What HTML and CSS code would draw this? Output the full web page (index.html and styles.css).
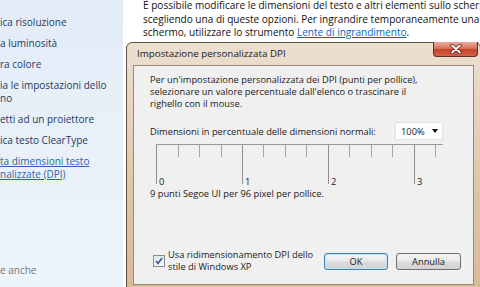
FILE: index.html
```html
<!DOCTYPE html>
<html lang="it">
<head>
    <meta charset="UTF-8">
    <meta name="viewport" content="width=device-width, initial-scale=1.0">
    <title>Schermo</title>
    <link rel="stylesheet" href="styles.css">
</head>
<body>
    <div class="window">
        <nav class="tasks">
            <a href="#" class="task">ica risoluzione</a>
            <a href="#" class="task">a luminosità</a>
            <a href="#" class="task">ra colore</a>
            <a href="#" class="task">ia le impostazioni dello<br>no</a>
            <a href="#" class="task">etti ad un proiettore</a>
            <a href="#" class="task">ica testo ClearType</a>
            <a href="#" class="task active">ta dimensioni testo<br>nalizzate (DPI)</a>
            <div class="see-also">e anche</div>
        </nav>
        <div class="content">
            <p class="intro">È possibile modificare le dimensioni del testo e altri elementi sullo schermo<br>
            scegliendo una di queste opzioni. Per ingrandire temporaneamente una parte dello<br>
            schermo, utilizzare lo strumento <a href="#">Lente di ingrandimento</a>.</p>
        </div>

        <div class="dialog">
            <div class="titlebar">
                <span class="title">Impostazione personalizzata DPI</span>
                <button class="close">
                    <svg width="12" height="10" viewBox="0 0 12 10">
                        <path d="M2 1.5 L10 8.5 M10 1.5 L2 8.5" stroke="#5a2418" stroke-width="3.4" stroke-linecap="round"/>
                        <path d="M2 1.5 L10 8.5 M10 1.5 L2 8.5" stroke="#fff" stroke-width="1.8" stroke-linecap="round"/>
                    </svg>
                </button>
            </div>
            <div class="client">
                <p class="lead">Per un'impostazione personalizzata dei DPI (punti per pollice),<br>
                selezionare un valore percentuale dall'elenco o trascinare il<br>
                righello con il mouse.</p>
                <div class="scale-row">
                    <span>Dimensioni in percentuale delle dimensioni normali:</span>
                    <div class="select">100%<span class="arrow"></span></div>
                </div>
                <div class="ruler">
                    <div class="major"><span>0</span></div>
                    <div class="major"><span>1</span></div>
                    <div class="major"><span>2</span></div>
                    <div class="major last"><span>3</span></div>
                </div>
                <p class="info">9 punti Segoe UI per 96 pixel per pollice.</p>
                <div class="footer">
                    <label class="check">
                        <span class="box">
                            <svg width="8" height="8" viewBox="0 0 8 8">
                                <path d="M1 4 L3 6.5 L7 1" fill="none" stroke="#3b5b8f" stroke-width="1.6"/>
                            </svg>
                        </span>
                        <span>Usa ridimensionamento DPI dello<br>stile di Windows XP</span>
                    </label>
                    <button class="btn default">OK</button>
                    <button class="btn">Annulla</button>
                </div>
            </div>
        </div>
    </div>
</body>
</html>
```

FILE: styles.css
```css
* {box-sizing: border-box;}

body {
    margin: 0;
    overflow: hidden;
    font-family: "Open Sans", "Noto Sans", sans-serif;
    background: #fff;
}

p {
    margin: 0;
}

.window {
    display: flex;
    position: relative;
    width: 480px;
    height: 287px;
    overflow: hidden;
}

/* left task pane */
.tasks {
    width: 123px;
    flex: none;
    display: flex;
    flex-direction: column;
    align-items: flex-start;
    gap: 8px;
    padding: 16px 0 10px 0;
    background: linear-gradient(to bottom, #e3ecf7, #eef4fb);
    white-space: nowrap;
    overflow: hidden;
}

.task {
    font-size: 10px;
    line-height: 13px;
    color: #1e3a5f;
    text-decoration: none;
}

.task.active {
    color: #2a64b8;
    text-decoration: underline;
}

.see-also {
    margin-top: auto;
    font-size: 10px;
    line-height: 13px;
    color: #737373;
}

/* main content */
.content {
    flex: 1;
    padding-left: 20px;
    white-space: nowrap;
    overflow: hidden;
}

.intro {
    margin-top: -1px;
    font-size: 10.05px;
    line-height: 13.5px;
    color: #111;
}

.intro a {
    color: #0a64c8;
}

/* dialog window */
.dialog {
    position: absolute;
    left: 126px;
    top: 42px;
    width: 355px;
    height: 252px;
    padding: 0 6px;
    border: 1px solid #5e5247;
    border-radius: 6px 6px 0 0;
    background: linear-gradient(to bottom, #ecdfd0, #dec5a8 60%, #d8bb98);
}

.titlebar {
    position: relative;
    height: 22px;
    display: flex;
    align-items: center;
}

.title {
    margin-left: 4px;
    margin-top: -2px;
    font-size: 9.8px;
    color: #1a1a1a;
}

.close {
    position: absolute;
    top: -1px;
    right: -4px;
    width: 45px;
    height: 15px;
    padding: 0;
    display: flex;
    align-items: center;
    justify-content: center;
    border: 1px solid #6b2c20;
    border-top: none;
    border-radius: 0 0 4px 4px;
    background: linear-gradient(to bottom, #e9aa9b, #d7765f 45%, #c5432b 55%, #d2624a);
}

.client {
    height: 220px;
    display: flex;
    flex-direction: column;
    align-items: flex-start;
    padding: 8px 30px 11px 16px;
    border: 1px solid #9a8877;
    background: #f0f0f0;
    font-size: 9.3px;
    color: #1a1a1a;
}

.lead {
    line-height: 12px;
}

.scale-row {
    width: 100%;
    margin-top: 12px;
    height: 18px;
    display: flex;
    align-items: center;
    justify-content: space-between;
}

.select {
    width: 48px;
    height: 18px;
    display: flex;
    align-items: center;
    justify-content: space-between;
    padding: 0 4px 0 5px;
    border: 1px solid #e2e2e2;
    background: #fff;
}

.arrow {
    width: 0;
    height: 0;
    border-left: 3.5px solid transparent;
    border-right: 3.5px solid transparent;
    border-top: 4px solid #111;
}

.ruler {
    margin: 4px 0 0 6px;
    width: 287px;
    height: 40px;
    display: flex;
    border-top: 1px solid #9a9a9a;
    background: repeating-linear-gradient(to right, #a4a4a4 0 1px, transparent 1px 21.5px) 0 0 / 100% 12px no-repeat;
}

.major {
    flex: 0 0 86px;
    display: flex;
    align-items: flex-end;
    border-left: 1px solid #8e8e8e;
}

.major.last {
    flex: 1;
}

.major span {
    margin: 0 0 -3px 2px;
    font-size: 9.3px;
    line-height: 10px;
}

.info {
    margin-top: 4px;
    line-height: 12px;
}

.footer {
    margin: auto -18px 0 3px;
    align-self: stretch;
    display: flex;
    align-items: center;
    gap: 8px;
}

.check {
    flex: 1;
    display: flex;
    align-items: center;
    gap: 3px;
    line-height: 12px;
}

.box {
    width: 12px;
    height: 12px;
    flex: none;
    display: flex;
    align-items: center;
    justify-content: center;
    border: 1px solid #8a8a8a;
    background: linear-gradient(to bottom, #dfe6ee, #f6f8fb);
}

.btn {
    width: 65px;
    height: 17px;
    padding: 0;
    border: 1px solid #707070;
    border-radius: 3px;
    background: linear-gradient(to bottom, #f4f4f4, #e9e9e9 48%, #dcdcdc 52%, #d2d2d2);
    font-family: inherit;
    font-size: 9.3px;
    color: #1a1a1a;
}

.btn.default {
    width: 64px;
    border-color: #3c7fb1;
    box-shadow: inset 0 0 0 1px #bfe3f7;
}
```
